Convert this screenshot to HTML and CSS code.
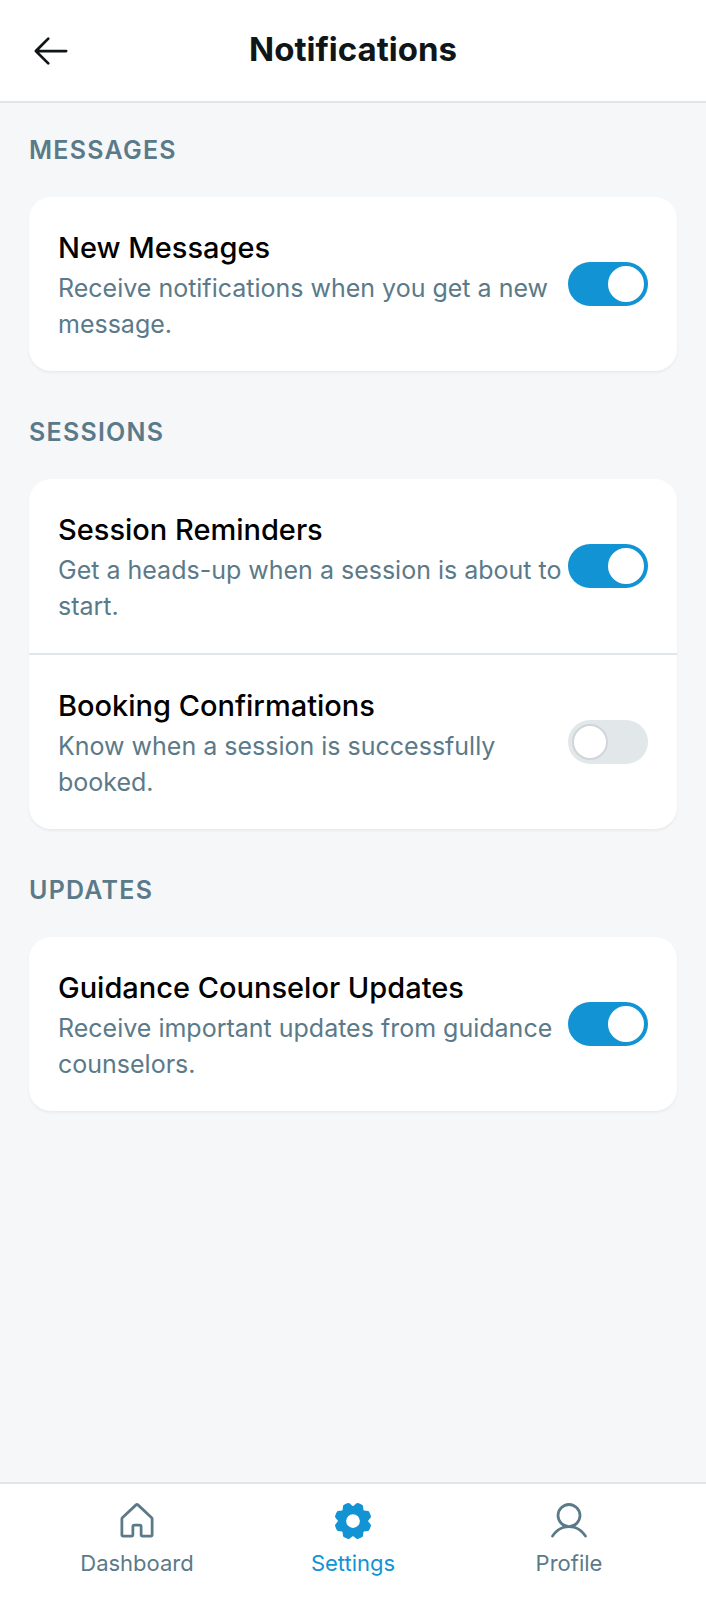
FILE: index.html
```html
<!DOCTYPE html>
<html lang="en">
<head>
<meta charset="utf-8">
<meta name="viewport" content="width=device-width, initial-scale=1">
<title>Notifications</title>
<link rel="stylesheet" href="styles.css">
</head>
<body class="page">
<header class="topbar">
  <button class="back" type="button" aria-label="Back">
    <svg class="icon" viewBox="0 0 256 256" fill="currentColor" aria-hidden="true"><path d="M224,128a8,8,0,0,1-8,8H59.31l58.35,58.34a8,8,0,0,1-11.32,11.32l-72-72a8,8,0,0,1,0-11.32l72-72a8,8,0,0,1,11.32,11.32L59.31,120H216A8,8,0,0,1,224,128Z"/></svg>
  </button>
  <h1 class="title">Notifications</h1>
</header>
<main class="content">
  <section class="group">
    <h2 class="group-title">MESSAGES</h2>
    <div class="card">
      <label class="row">
        <span class="text"><span class="name">New Messages</span><span class="desc">Receive notifications when you get a new message.</span></span>
        <input class="switch" type="checkbox" role="switch" checked>
      </label>
    </div>
  </section>
  <section class="group">
    <h2 class="group-title">SESSIONS</h2>
    <div class="card">
      <label class="row">
        <span class="text"><span class="name">Session Reminders</span><span class="desc">Get a heads-up when a session is about to start.</span></span>
        <input class="switch" type="checkbox" role="switch" checked>
      </label>
      <label class="row">
        <span class="text"><span class="name">Booking Confirmations</span><span class="desc">Know when a session is successfully booked.</span></span>
        <input class="switch" type="checkbox" role="switch">
      </label>
    </div>
  </section>
  <section class="group">
    <h2 class="group-title">UPDATES</h2>
    <div class="card">
      <label class="row">
        <span class="text"><span class="name">Guidance Counselor Updates</span><span class="desc">Receive important updates from guidance counselors.</span></span>
        <input class="switch" type="checkbox" role="switch" checked>
      </label>
    </div>
  </section>
</main>
<nav class="tabs">
  <a class="tab" href="#dashboard">
    <svg class="icon" viewBox="0 0 256 256" fill="currentColor" aria-hidden="true"><path d="M218.83,103.77l-80-75.48a1.14,1.14,0,0,1-.11-.11,16,16,0,0,0-21.53,0l-.11.11L37.17,103.77A16,16,0,0,0,32,115.55V208a16,16,0,0,0,16,16H96a16,16,0,0,0,16-16V160h32v48a16,16,0,0,0,16,16h48a16,16,0,0,0,16-16V115.55A16,16,0,0,0,218.83,103.77ZM208,208H160V160a16,16,0,0,0-16-16H112a16,16,0,0,0-16,16v48H48V115.55l.11-.1L128,40l79.9,75.43.11.1Z"/></svg>
    <span>Dashboard</span>
  </a>
  <a class="tab tab-active" href="#settings" aria-current="page">
    <svg class="icon" viewBox="0 0 256 256" fill="currentColor" aria-hidden="true"><path d="M216,130.16q.06-2.16,0-4.32l14.92-18.64a8,8,0,0,0,1.48-7.06,107.6,107.6,0,0,0-10.88-26.25,8,8,0,0,0-6-3.93l-23.72-2.64q-1.48-1.56-3-3L186,40.54a8,8,0,0,0-3.94-6,107.29,107.29,0,0,0-26.25-10.86,8,8,0,0,0-7.06,1.48L130.16,40Q128,40,125.84,40L107.2,25.11a8,8,0,0,0-7.06-1.48A107.6,107.6,0,0,0,73.89,34.51a8,8,0,0,0-3.93,6L67.32,64.27q-1.56,1.49-3,3L40.54,70a8,8,0,0,0-6,3.94,107.71,107.71,0,0,0-10.87,26.25,8,8,0,0,0,1.49,7.06L40,125.84Q40,128,40,130.16L25.11,148.8a8,8,0,0,0-1.48,7.06,107.6,107.6,0,0,0,10.88,26.25,8,8,0,0,0,6,3.93l23.72,2.64q1.49,1.56,3,3L70,215.46a8,8,0,0,0,3.94,6,107.71,107.71,0,0,0,26.25,10.87,8,8,0,0,0,7.06-1.49L125.84,216q2.16.06,4.32,0l18.64,14.92a8,8,0,0,0,7.06,1.48,107.21,107.21,0,0,0,26.25-10.88,8,8,0,0,0,3.93-6l2.64-23.72q1.56-1.48,3-3L215.46,186a8,8,0,0,0,6-3.94,107.71,107.71,0,0,0,10.87-26.25,8,8,0,0,0-1.49-7.06ZM128,168a40,40,0,1,1,40-40A40,40,0,0,1,128,168Z"/></svg>
    <span>Settings</span>
  </a>
  <a class="tab" href="#profile">
    <svg class="icon" viewBox="0 0 256 256" fill="currentColor" aria-hidden="true"><path d="M230.92,212c-15.23-26.33-38.7-45.21-66.09-54.16a72,72,0,1,0-73.66,0C63.78,166.78,40.31,185.66,25.08,212a8,8,0,1,0,13.85,8c18.84-32.56,52.14-52,89.07-52s70.23,19.44,89.07,52a8,8,0,1,0,13.85-8ZM72,96a56,56,0,1,1,56,56A56.06,56.06,0,0,1,72,96Z"/></svg>
    <span>Profile</span>
  </a>
</nav>
</body>
</html>
```

FILE: styles.css
```css
*, *::before { box-sizing: border-box; }

.page {
  margin: 0;
  min-height: 100vh;
  display: flex;
  flex-direction: column;
  background: #f5f7f9;
  color: #000;
  font-family: Inter, "Liberation Sans", sans-serif;
}

.icon { display: block; width: 44px; height: 44px; }

.topbar {
  display: grid;
  grid-template-columns: 44px 1fr 44px;
  align-items: start;
  padding: 29px 29px 28px;
  background: #fff;
  border-bottom: 2px solid #e0e6ea;
  color: #101618;
}

.back {
  padding: 0;
  border: 0;
  background: none;
  color: inherit;
  cursor: pointer;
}

.title {
  margin: 0;
  font-size: 33px;
  line-height: 41px;
  font-weight: 700;
  text-align: center;
}

.content {
  flex: 1;
  padding: 0 29px 29px;
}

.group + .group { margin-top: 14px; }

.group-title {
  margin: 0;
  padding: 29px 0;
  font-size: 25px;
  line-height: 36px;
  font-weight: 600;
  letter-spacing: 0.05em;
  color: #5b7a89;
}

.card {
  background: #fff;
  border-radius: 22px;
  box-shadow: 0 2px 3px rgba(0, 0, 0, 0.05);
}

.row {
  display: flex;
  align-items: center;
  padding: 29px;
  cursor: pointer;
}

.row + .row { border-top: 2px solid #e0e6ea; }

.text { flex: 1; }

.name, .desc { display: block; }

.name {
  font-size: 29px;
  line-height: 44px;
  font-weight: 500;
}

.desc {
  font-size: 25px;
  line-height: 36px;
  color: #5b7a89;
}

.switch {
  appearance: none;
  flex: none;
  display: flex;
  width: 80px;
  height: 44px;
  margin: 0;
  padding: 4px;
  border-radius: 22px;
  background: #e2e8ea;
  cursor: pointer;
}

.switch::before {
  content: "";
  width: 36px;
  height: 36px;
  border: 2px solid #d1d5db;
  border-radius: 50%;
  background: #fff;
}

.switch:checked {
  justify-content: flex-end;
  background: #1193d4;
}

.switch:checked::before { border-color: #fff; }

.tabs {
  display: flex;
  padding: 15px 29px 20px;
  background: #fff;
  border-top: 2px solid #e0e6ea;
}

.tab {
  flex: 1;
  display: flex;
  flex-direction: column;
  align-items: center;
  gap: 4px;
  font-size: 22px;
  line-height: 33px;
  font-weight: 400;
  color: #5b7a89;
  text-decoration: none;
}

.tab-active { color: #1193d4; }
```
